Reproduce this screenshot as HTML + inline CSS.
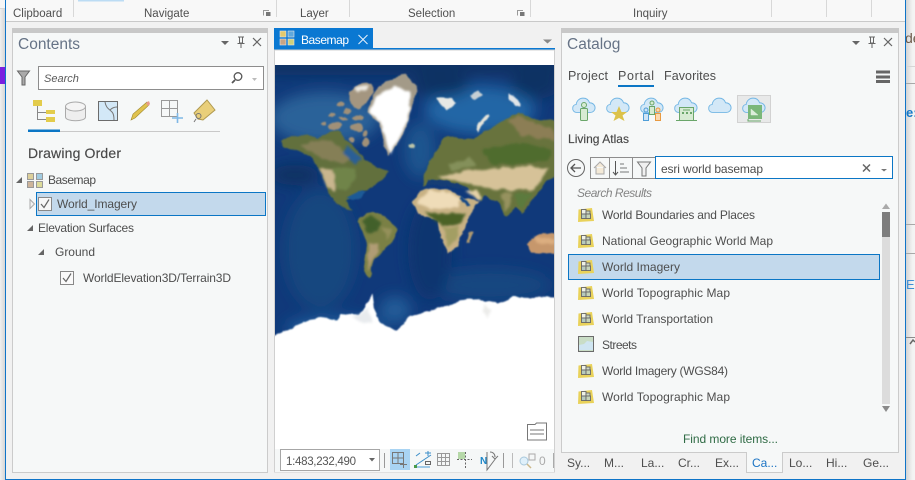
<!DOCTYPE html>
<html><head><meta charset="utf-8"><title>Catalog</title>
<style>
html,body{margin:0;padding:0;width:915px;height:480px;overflow:hidden;background:#f1f1f1}
svg{display:block;position:absolute;left:0;top:0}
text{font-family:"Liberation Sans",sans-serif;font-size:12px;fill:#4e4e4e}
.h{font-size:15.5px;fill:#667386}
.lbl{font-size:11.5px;fill:#505050}
</style></head><body>
<svg width="915" height="480" viewBox="0 0 915 480" xmlns="http://www.w3.org/2000/svg">
<defs>
<linearGradient id="gl" x1="0" x2="1" y1="0" y2="0"><stop offset="0" stop-color="#f0f0f0"/><stop offset="1" stop-color="#d6d6d6"/></linearGradient>
<linearGradient id="gr" x1="0" x2="1" y1="0" y2="0"><stop offset="0" stop-color="#d4d4d4"/><stop offset=".7" stop-color="#f2f2f2"/><stop offset="1" stop-color="#f4f4f4"/></linearGradient>
<filter id="rough" x="-10%" y="-10%" width="120%" height="120%">
<feTurbulence type="fractalNoise" baseFrequency="0.09" numOctaves="3" seed="4" result="n"/>
<feDisplacementMap in="SourceGraphic" in2="n" scale="5" xChannelSelector="R" yChannelSelector="G"/>
<feGaussianBlur stdDeviation="0.8"/>
</filter>
<filter id="soft" x="-20%" y="-20%" width="140%" height="140%">
<feTurbulence type="fractalNoise" baseFrequency="0.12" numOctaves="2" seed="9" result="n"/>
<feDisplacementMap in="SourceGraphic" in2="n" scale="5" xChannelSelector="G" yChannelSelector="R"/>
<feGaussianBlur stdDeviation="1.3"/>
</filter>
<filter id="b6" x="-30%" y="-30%" width="160%" height="160%"><feGaussianBlur stdDeviation="7"/></filter>
<clipPath id="mc"><rect x="275" y="65" width="279" height="385"/></clipPath>
<symbol id="pk" viewBox="0 0 16 14" overflow="visible">
<path d="M0.5 1.5L14 0L16 13L0 14Z" fill="#e9d25a"/>
<rect x="3.500" y="1.500" width="4.500" height="4.500" fill="#eef1e6" stroke="#666" stroke-width=".9"/>
<rect x="8" y="3" width="4" height="3" fill="#cdd8c0" stroke="#666" stroke-width=".9"/>
<rect x="3.500" y="6" width="4.500" height="4.500" fill="#b6cabd" stroke="#666" stroke-width=".9"/>
<rect x="8" y="6" width="4.500" height="4.500" fill="#c6d4b8" stroke="#666" stroke-width=".9"/>
</symbol>
<symbol id="cl" viewBox="0 0 26 18" overflow="visible">
<path d="M5 16.5C1.5 16.5 .5 13.5 .8 11.5C1 9.5 2.5 8 4.5 8C5 4 8 1 12 1C15.5 1 18 3 19 6C22.5 6 25 8.5 25 11.5C25 14.5 22.5 16.5 20 16.5Z" fill="#d3e8f7" stroke="#72b6e4" stroke-width="1"/>
</symbol>
</defs>

<!-- Left strip -->
<rect x="0" y="0" width="5" height="480" fill="url(#gl)"/>
<rect x="0" y="0" width="5" height="9" fill="#f6f6f6"/>
<rect x="0" y="8" width="5" height="1" fill="#d8d8d8"/>
<rect x="0" y="67" width="5" height="17" fill="#7a1fe0"/>

<!-- Right strip -->
<rect x="906" y="0" width="9" height="480" fill="url(#gr)"/>
<rect x="906" y="66" width="9" height="1" fill="#d6d6d6"/>
<rect x="906" y="83" width="9" height="1" fill="#a8a8a8"/>
<rect x="906" y="224" width="9" height="1" fill="#a8a8a8"/>
<rect x="906" y="253" width="9" height="1" fill="#a8a8a8"/>
<rect x="906" y="337" width="9" height="1" fill="#8c8c8c"/>
<text x="905" y="43" style="font-size:14px;fill:#6d5a4a">de</text>
<text x="906" y="117" style="font-size:13px;font-weight:bold;fill:#1679c8">e:</text>
<text x="906" y="289" style="font-size:13px;fill:#3f8fd6">EV</text>
<path d="M910 344L913 340L915 342" fill="none" stroke="#666" stroke-width="1.5"/>

<!-- Main window -->
<rect x="6" y="0" width="899" height="479" fill="#f1f1f1"/>
<rect x="6" y="0" width="899" height="21" fill="#f8f8f8"/>
<rect x="6" y="21" width="899" height="1" fill="#c9c9c9"/>
<rect x="78" y="0" width="46" height="1.5" fill="#bcdcf4"/>
<g fill="#d8d8d8">
<rect x="73" y="0" width="1" height="17"/><rect x="276" y="0" width="1" height="17"/><rect x="349" y="0" width="1" height="17"/><rect x="530" y="0" width="1" height="17"/><rect x="771" y="0" width="1" height="17"/><rect x="826" y="0" width="1" height="17"/><rect x="871" y="0" width="1" height="17"/>
</g>
<text class="lbl" x="13" y="17">Clipboard</text>
<text class="lbl" x="144" y="17">Navigate</text>
<text class="lbl" x="300" y="17">Layer</text>
<text class="lbl" x="408" y="17">Selection</text>
<text class="lbl" x="633" y="17">Inquiry</text>
<g fill="none" stroke="#999" stroke-width="1">
<path d="M263.500 15.500V10.500H269"/><path d="M517.500 15.500V10.500H523"/>
</g>
<rect x="266" y="12" width="4.500" height="4" fill="#777"/><rect x="520" y="12" width="4.500" height="4" fill="#777"/>

<!-- Contents panel -->
<rect x="12.500" y="28.500" width="255" height="444" fill="#f6f8f8" stroke="#cbcbcb"/>
<rect x="12" y="28" width="256" height="5" fill="#c8c8c8"/>
<text class="h" x="18" y="49">Contents</text>
<path d="M221 41H229L225 45Z" fill="#666"/>
<path d="M238 37H244M239.500 37V43H242.500V37M237.500 43.500H244.500M241 44V48" fill="none" stroke="#666"/>
<path d="M253 38L261 46M261 38L253 46" stroke="#666" stroke-width="1.2"/>
<path d="M17.500 71H29.500L25 77V85H22V77Z" fill="#aaa" stroke="#666"/>
<rect x="38.500" y="66.500" width="225" height="23" fill="#fff" stroke="#8d8d8d"/>
<text x="44" y="82" style="font-style:italic;font-size:11px;fill:#5a5a5a">Search</text>
<circle cx="238" cy="76.500" r="3.800" fill="none" stroke="#555" stroke-width="1.300"/>
<path d="M235 80L232 83" stroke="#555" stroke-width="1.800"/>
<path d="M252 78H257L254.500 81Z" fill="#bbb"/>
<g>
<rect x="33" y="100" width="9" height="6" fill="#e3cc4c"/>
<rect x="46" y="110" width="9" height="4" fill="#e3cc4c"/>
<rect x="46" y="117" width="9" height="5" fill="#e3cc4c"/>
<path d="M37.500 106V119.500H46M37.500 112.500H46" fill="none" stroke="#888"/>
<path d="M65.500 106.500V117C65.500 122 85.500 122 85.500 117V106.500" fill="#eee" stroke="#aaa"/>
<ellipse cx="75.500" cy="106.500" rx="10" ry="4.500" fill="#f4f4f4" stroke="#aaa"/>
<rect x="98.500" y="101.500" width="19" height="19" fill="#d3e8f7" stroke="#6c6c6c"/>
<path d="M105 102C106 108 109 109 112 112C114 114 114 118 114 120M110 110C112 108 115 107 117 107" fill="none" stroke="#777"/>
<path d="M131 120L133 114L147 102L149 105L135 118Z" fill="#e0c24e" stroke="#a08a30" stroke-width=".6"/>
<path d="M146 103L149 101L150 104L148 106Z" fill="#e89a8c"/>
<g fill="none" stroke="#999"><rect x="161.500" y="100.500" width="16" height="16"/><path d="M169.500 100.500V116.500M161.500 108.500H177.500"/></g>
<path d="M177.500 113V123M172 118H183" stroke="#7fb8e6" stroke-width="1.600"/>
<path d="M194 113L207 100L215 110L203 120L198 119Z" fill="#e9cf7a" stroke="#b09a50"/>
<circle cx="198.500" cy="116" r="2.500" fill="none" stroke="#777"/>
<path d="M196 119L194 122" stroke="#777"/>
</g>
<rect x="28" y="131" width="192" height="1" fill="#c9c9c9"/>
<rect x="28" y="129.500" width="32" height="2.500" fill="#0b76c5"/>

<text x="28" y="158" style="font-size:14px;fill:#484848;stroke:#484848;stroke-width:.15" textLength="93">Drawing Order</text>
<path d="M16 183L22 177V183Z" fill="#666"/>
<g stroke="#999" stroke-width="1">
<rect x="27.500" y="173.500" width="6" height="6" fill="#dccf9a"/><rect x="36.500" y="173.500" width="6" height="6" fill="#a0cbe0"/>
<rect x="27.500" y="181.500" width="6" height="6" fill="#cdb49a"/><rect x="36.500" y="181.500" width="6" height="6" fill="#dcdb9a"/>
</g>
<text x="48" y="184" textLength="48">Basemap</text>
<rect x="36.500" y="192.500" width="229" height="23" fill="#c3d9ec" stroke="#0b76c5"/>
<path d="M30 199.500L34.500 204L30 208.500Z" fill="#f2f2f2" stroke="#aaa"/>
<rect x="38.500" y="197.500" width="13" height="13" fill="#f7f7f7" stroke="#888"/>
<path d="M41 204L44 207.500L49 199.500" fill="none" stroke="#666" stroke-width="1.200"/>
<text x="57" y="208" textLength="80">World_Imagery</text>
<path d="M27 231L33 225V231Z" fill="#666"/>
<text x="38" y="232" textLength="96">Elevation Surfaces</text>
<path d="M38 255L44 249V255Z" fill="#666"/>
<text x="55" y="256" textLength="40">Ground</text>
<rect x="60.500" y="271.500" width="13" height="13" fill="#fafafa" stroke="#888"/>
<path d="M63 278L66 281.500L71 273.500" fill="none" stroke="#666" stroke-width="1.200"/>
<text x="83" y="282" textLength="148">WorldElevation3D/Terrain3D</text>

<!-- Map view -->
<rect x="274" y="28" width="99" height="20" fill="#0a78d2"/>
<rect x="274" y="48" width="281" height="2" fill="#0a78d2"/>
<rect x="274.500" y="50" width="280" height="422" fill="#fff" stroke="#d0d0d0"/>
<g stroke="#e5e5e5" stroke-width=".6">
<rect x="280" y="31" width="6" height="6" fill="#e2c96c"/><rect x="288" y="31" width="6" height="6" fill="#5fa8dc"/>
<rect x="280" y="39" width="6" height="6" fill="#c8a484"/><rect x="288" y="39" width="6" height="6" fill="#cfd07c"/>
</g>
<text x="301" y="44" style="fill:#fff" textLength="48">Basemap</text>
<path d="M358.500 35L367.500 44M367.500 35L358.500 44" stroke="#e8f2fb" stroke-width="1"/>
<path d="M543 39.500H552L547.500 43.500Z" fill="#888"/>

<g clip-path="url(#mc)">
<rect x="275" y="65" width="279" height="385" fill="#10397a"/>
<g filter="url(#b6)">
<ellipse cx="325" cy="118" rx="55" ry="26" fill="#2a6299"/>
<ellipse cx="480" cy="110" rx="55" ry="24" fill="#2266a6"/>
<ellipse cx="420" cy="150" rx="16" ry="28" fill="#1a548f"/>
<rect x="265" y="55" width="300" height="20" fill="#0c3064"/>
<ellipse cx="535" cy="85" rx="25" ry="14" fill="#0c3064"/>
<ellipse cx="440" cy="85" rx="30" ry="12" fill="#0c3064"/>
<ellipse cx="320" cy="250" rx="36" ry="60" fill="#15467f"/>
<ellipse cx="490" cy="285" rx="60" ry="16" fill="#164780"/>
<ellipse cx="335" cy="328" rx="50" ry="12" fill="#1f5a99"/>
<ellipse cx="395" cy="310" rx="16" ry="14" fill="#245c98"/>
<ellipse cx="295" cy="175" rx="25" ry="10" fill="#0b3062"/>
<ellipse cx="430" cy="250" rx="22" ry="50" fill="#0e3570"/>
</g>
<!-- land silhouettes -->
<g filter="url(#rough)">
<path d="M349 92Q358 82 372 84L374 93Q366 104 358 110Q352 108 349 100Z" fill="#a49680"/>
<g fill="#a09078"><ellipse cx="340" cy="104" rx="3.500" ry="2.500"/><ellipse cx="348" cy="111" rx="4" ry="2.500"/><ellipse cx="332" cy="115" rx="4" ry="2"/><ellipse cx="344" cy="118" rx="5" ry="2"/><ellipse cx="358" cy="118" rx="5" ry="2.500"/><ellipse cx="324" cy="124" rx="3" ry="2"/><ellipse cx="335" cy="126" rx="6" ry="3.500"/><ellipse cx="356" cy="128" rx="6" ry="4"/><ellipse cx="366" cy="142" rx="4" ry="5"/><ellipse cx="352" cy="140" rx="3" ry="3"/><ellipse cx="365" cy="133" rx="3" ry="3"/></g>
<path d="M376 90Q388 78 402 75Q412 76 417 91Q414 102 410 112L406 128L393 150L388 156L383 142L379 122L368 112L372 100Z" fill="#a39a88"/>
<path d="M282 139Q302 133 318 138L330 132Q340 126 345 140L352 145L366 160L378 168L389 172L384 177L368 190L354 197L346 201L353 212L342 207L330 196L324 180L320 170L310 156L298 151L285 148Z" fill="#62703c"/>
<path d="M358 222Q364 212 371 212L384 216L398 228L389 246L376 258L369 278L363 270L367 242Z" fill="#7a8044"/>
<path d="M413 202Q420 190 428 188L450 190L464 198L479 201L471 213L464 230L457 246L448 253L441 238L438 221L418 213Z" fill="#c8b184"/>
<path d="M435 153Q440 140 448 135L458 138L475 139L492 127L518 112L532 118L575 123V168L547 181L534 197L522 213L516 208L507 216L497 201L483 196L480 201L467 188L452 183L432 179L422 187L425 172Z" fill="#68733c"/>
<path d="M527 245Q534 235 541 233L575 235V257L544 253L531 252Z" fill="#c6976c"/>
<path d="M437 97L451 98L455 103L447 110L442 106Z" fill="#e6e8e5"/>
<path d="M470 95L478 91L484 95L475 99Z" fill="#c6cfd4"/>
<path d="M509 93L514 96L520 106L514 106L509 100Z" fill="#e0e5e8"/>
<path d="M476 130C478 121 484 117 488 114L489 117C485 121 481 125 478 133Z" fill="#e6e4da"/>
<ellipse cx="412" cy="146" rx="3" ry="2" fill="#bcc4a8"/>
<path d="M469 232L473 231L470 244L467 243Z" fill="#b09a70"/>
<path d="M240 340L275 335L293 327L317 317L337 320L340 313L360 315L373 293L376 317L380 323L395 332L410 317L443 307L470 298L497 303L513 297L554 298L590 298V500H240Z" fill="#fff"/>
</g>
<rect x="275" y="342" width="279" height="108" fill="#fff"/>
<!-- land interior -->
<g filter="url(#soft)">
<path d="M376 96L395 85L410 92L410 108L406 124L397 142L390 154L385 140L381 122L369 112L373 104Z" fill="#fff"/>
<path d="M355 87L368 85L367 90L357 92Z" fill="#eeebe4"/>
<path d="M300 146L316 141L330 140L342 150L352 158L344 163L325 160L310 152Z" fill="#857f56"/>
<path d="M320 168L335 170L335 192L327 188Z" fill="#c9b68e"/>
<path d="M333 168L354 168L357 178L346 190L336 190Z" fill="#6f8448"/>
<path d="M347 146L362 158L356 164L344 154Z" fill="#2a5f96"/>
<path d="M362 219L370 216L381 222L378 231L367 233Z" fill="#43602a"/>
<path d="M368 243L379 243L378 252L371 262L368 272Z" fill="#b09c74"/>
<path d="M382 226L394 229L387 239Z" fill="#94905a"/>
<path d="M416 203L429 190L449 192L461 199L458 208L431 209Z" fill="#efdcb8"/>
<path d="M424 212L440 214L457 213L466 213L460 224L443 226Z" fill="#4c6228"/>
<path d="M443 227L460 226L456 241L448 248Z" fill="#a39e64"/>
<path d="M508 120L518 116L530 122L552 128L556 140L522 136Z" fill="#8c7e54"/>
<path d="M438 177L470 170L500 168L530 166L550 168L534 190L500 190L470 184Z" fill="#d6c298"/>
<path d="M465 191L476 190L483 198L477 199Z" fill="#e6d1a8"/>
<path d="M500 194L512 192L509 207L505 212Z" fill="#96925e"/>
<path d="M514 194L532 192L526 204L520 209Z" fill="#5c7a3c"/>
<path d="M482 150L522 142L552 150L548 162L492 165Z" fill="#4f6c2e"/>
<path d="M448 164L470 158L476 166L452 171Z" fill="#84905a"/>
<path d="M535 238L556 238L556 244L538 244Z" fill="#dcae80"/>
<path d="M352 318L368 308L372 324L362 322Z" fill="#e8ebee"/>
<path d="M484 305L491 311L487 318L484 311Z" fill="#ececea"/>
</g>
<!-- seas -->
<g filter="url(#rough)">
<path d="M428 180L448 182L466 186L468 190L450 187L428 184Z" fill="#123c74"/>
<path d="M463 196L470 206L467 207L461 198Z" fill="#174a86"/>
<path d="M346 198L358 192L366 192L362 198L352 200Z" fill="#1f5a96"/>
</g>
</g>

<path d="M527.500 424.500H535L536.500 423H546.500V440H527.500Z" fill="#fff" stroke="#777" stroke-width="1"/>
<path d="M530 430H544M530 434H544" stroke="#777" fill="none"/>

<!-- status bar -->
<rect x="275" y="449" width="279" height="23" fill="#f5f7f7"/>
<rect x="280.500" y="449.500" width="99" height="21" fill="#fff" stroke="#a6a6a6"/>
<text x="286" y="465" style="font-size:11.500px;fill:#555" textLength="70">1:483,232,490</text>
<path d="M369 458H375L372 461.500Z" fill="#666"/>
<rect x="384" y="453" width="1" height="15" fill="#999"/>
<rect x="390" y="449" width="20" height="21" fill="#a9d4f3"/>
<g fill="none" stroke="#777"><rect x="392.500" y="452.500" width="11" height="11"/><path d="M398 452.500V463.500M392.500 458H403.500"/><path d="M403.500 461V468M400 464.500H407"/></g>
<g fill="none"><path d="M416 465L431 455M416 456L420 453M425 453H431M428 451V456" stroke="#3a8dc8"/><path d="M415 467H430" stroke="#4a9dd8"/><rect x="414" y="465" width="3" height="3" fill="#4a9a4a"/><rect x="425.500" y="461.500" width="5" height="3" stroke="#666"/></g>
<g fill="none" stroke="#999"><rect x="437.500" y="453.500" width="12" height="12"/><path d="M441.500 453.500V465.500M445.500 453.500V465.500M437.500 457.500H449.500M437.500 461.500H449.500"/></g>
<rect x="458" y="452" width="7" height="7" fill="#b6d8a8"/>
<path d="M457 459.500H472M465.500 452V468" fill="none" stroke="#666" stroke-dasharray="2 1.500"/>
<text x="480" y="464" style="font-size:10px;font-weight:bold;fill:#1f87c8">N</text>
<path d="M487 452V470L496 458M490 452C493 452 495 454 495 457M492 456L495 459L498 456" fill="none" stroke="#777"/>
<rect x="503" y="453" width="1" height="15" fill="#999"/>
<rect x="512" y="453" width="1" height="15" fill="#bbb"/>
<circle cx="524" cy="461" r="4" fill="#dff0fa" stroke="#a8c8dc"/>
<path d="M527 464L531 468" stroke="#ccb88a" stroke-width="1.500"/>
<rect x="529" y="454" width="6" height="6" fill="none" stroke="#aaa"/>
<text x="539" y="465" style="fill:#aaa">0</text>
<rect x="553" y="453" width="1" height="15" fill="#aaa"/>

<!-- Catalog panel -->
<rect x="561.500" y="28.500" width="337" height="424" fill="#f6f8f8" stroke="#cbcbcb"/>
<rect x="561" y="28" width="338" height="5" fill="#c8c8c8"/>
<text class="h" x="567" y="49">Catalog</text>
<path d="M852 41H860L856 45Z" fill="#666"/>
<path d="M869 37H875M870.500 37V43H873.500V37M868.500 43.500H875.500M872 44V48" fill="none" stroke="#666"/>
<path d="M884 38L892 46M892 38L884 46" stroke="#666" stroke-width="1.200"/>
<text x="568" y="80" style="font-size:12.500px" textLength="40">Project</text>
<text x="618" y="80" style="font-size:12.500px" textLength="36">Portal</text>
<text x="664" y="80" style="font-size:12.500px" textLength="52">Favorites</text>
<rect x="618" y="85" width="36" height="2" fill="#0b76c5"/>
<g fill="#666"><rect x="876" y="70.500" width="14" height="3"/><rect x="876" y="75.500" width="14" height="3"/><rect x="876" y="80" width="14" height="3"/></g>
<use href="#cl" x="572" y="97" width="24" height="17"/>
<circle cx="584" cy="105" r="2.500" fill="#d7ebd3" stroke="#6aa66a"/><rect x="580.500" y="108.500" width="7" height="12" rx="1" fill="#d7ebd3" stroke="#6aa66a"/>
<use href="#cl" x="606" y="97" width="24" height="17"/>
<path d="M619 106L621.500 112H627L622.500 115.500L624.500 121L619 118L613.500 121L615.500 115.500L611 112H616.500Z" fill="#dcc24a"/>
<use href="#cl" x="640" y="97" width="24" height="17"/>
<circle cx="652" cy="103" r="2" fill="#d7ebd3" stroke="#6aa66a"/><rect x="649.500" y="106.500" width="5" height="8" fill="#d7ebd3" stroke="#6aa66a"/>
<circle cx="646" cy="110" r="2" fill="#cfe5f6" stroke="#4f9ed8"/><rect x="643.500" y="113.500" width="5" height="7" fill="#cfe5f6" stroke="#4f9ed8"/>
<circle cx="658" cy="110" r="2" fill="#fbd9b0" stroke="#e89a42"/><rect x="655.500" y="113.500" width="5" height="7" fill="#fbd9b0" stroke="#e89a42"/>
<use href="#cl" x="674" y="97" width="24" height="17"/>
<rect x="679.500" y="107.500" width="14" height="13" fill="#d7ebd3" stroke="#6aa66a"/><path d="M676 120.500H697" stroke="#6aa66a"/><path d="M683 110H690" stroke="#6aa66a"/><path d="M682 113H684M686 113H688M690 113H692" stroke="#6aa66a" stroke-width="2"/>
<use href="#cl" x="708" y="97" width="24" height="17"/>
<rect x="737.500" y="95.500" width="33" height="27" fill="#e8e9e9" stroke="#d2d2d2"/>
<use href="#cl" x="742" y="97" width="24" height="17"/>
<rect x="748" y="105" width="14" height="14" fill="#7ab77a"/><path d="M748 119V121H761" fill="none" stroke="#6aa66a"/><path d="M751 115V109L758 115Z" fill="#dbeedb" stroke="#dbeedb" stroke-width=".5"/>

<text x="568" y="143" style="fill:#484848;stroke:#484848;stroke-width:.15" textLength="61">Living Atlas</text>
<circle cx="576" cy="168" r="8.500" fill="#f6f8f8" stroke="#666"/>
<path d="M581 168H571M575 164L571 168L575 172" fill="none" stroke="#555" stroke-width="1.300"/>
<rect x="590.500" y="157.500" width="65" height="21" fill="#f6f8f8" stroke="#8d8d8d"/>
<path d="M609.500 157.500V178.500M632.500 157.500V178.500" stroke="#8d8d8d"/>
<path d="M594 168L600 162L606 168M596 167V174H604V167" fill="#f4ead8" stroke="#aaa"/>
<path d="M615.500 161V175M613 172L615.500 175L618 172" fill="none" stroke="#555"/>
<path d="M620 164H624M620 168H627M620 172H629" stroke="#777"/>
<path d="M637.500 162H650.500L646 168V176H642V168Z" fill="#f0f0f0" stroke="#777"/>
<rect x="655.500" y="156.500" width="237" height="22" fill="#fff" stroke="#0b76c5"/>
<text x="661" y="173" textLength="102">esri world basemap</text>
<path d="M863 164.500L870 171.500M870 164.500L863 171.500" stroke="#666" stroke-width="1.500"/>
<path d="M881 169H887L884 171.500Z" fill="#777"/>
<text x="577" y="197" style="font-style:italic;fill:#858585" textLength="75">Search Results</text>

<rect x="568.500" y="254.500" width="311" height="25" fill="#c3d9ec" stroke="#0b76c5"/>
<use href="#pk" x="578" y="208" width="16" height="14"/>
<use href="#pk" x="578" y="234" width="16" height="14"/>
<use href="#pk" x="578" y="260" width="16" height="14"/>
<use href="#pk" x="578" y="286" width="16" height="14"/>
<use href="#pk" x="578" y="312" width="16" height="14"/>
<rect x="578.500" y="336.500" width="15" height="15" fill="#c9ddc6" stroke="#6b6b6b"/>
<path d="M579 350V345L584 344L587 341L593 342V350Z" fill="#cfe5f1"/>
<use href="#pk" x="578" y="364" width="16" height="14"/>
<use href="#pk" x="578" y="390" width="16" height="14"/>
<text x="602" y="219" textLength="153">World Boundaries and Places</text>
<text x="602" y="245" textLength="171">National Geographic World Map</text>
<text x="602" y="271" textLength="78">World Imagery</text>
<text x="602" y="297" textLength="128">World Topographic Map</text>
<text x="602" y="323" textLength="111">World Transportation</text>
<text x="602" y="349" textLength="35">Streets</text>
<text x="602" y="375" textLength="126">World Imagery (WGS84)</text>
<text x="602" y="401" textLength="128">World Topographic Map</text>

<path d="M882 209L886 203.500L890 209Z" fill="#aaa"/>
<rect x="882" y="212" width="8" height="192" fill="#dcdcdc"/>
<rect x="882" y="212" width="8" height="25" fill="#7d7d7d"/>
<path d="M882 406H890L886 412Z" fill="#8a8a8a"/>
<text x="683" y="443" style="fill:#2f6b45" textLength="95">Find more items...</text>

<!-- bottom tabs -->
<path d="M746.500 453V472.500H782.500V453" fill="#f6f8f8" stroke="#cbcbcb"/>
<rect x="747" y="451" width="35" height="3" fill="#f6f8f8"/>
<text x="567" y="467">Sy...</text>
<text x="604" y="467">M...</text>
<text x="641" y="467">La...</text>
<text x="678" y="467">Cr...</text>
<text x="715" y="467">Ex...</text>
<text x="752" y="467" style="fill:#1b74c4">Ca...</text>
<text x="789" y="467">Lo...</text>
<text x="826" y="467">Hi...</text>
<text x="863" y="467">Ge...</text>

<!-- window border -->
<rect x="5" y="0" width="1" height="480" fill="#0f74c8"/>
<rect x="905" y="0" width="1" height="480" fill="#0f74c8"/>
<rect x="5" y="479" width="901" height="1" fill="#0f74c8"/>
</svg>
</body></html>
